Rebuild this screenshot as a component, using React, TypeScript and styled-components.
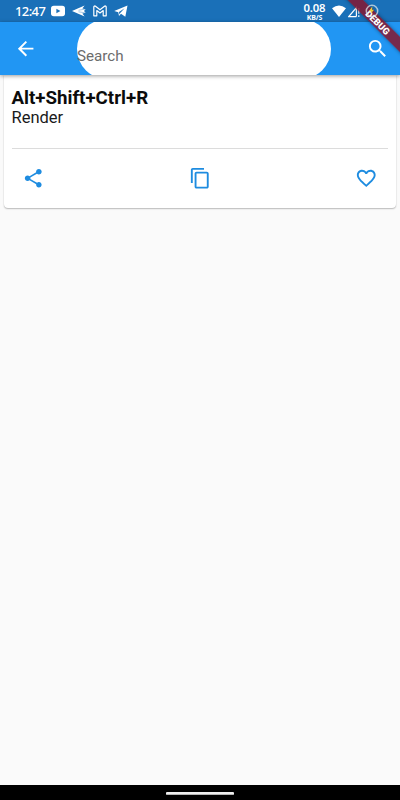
import React from 'react';
import styled, { createGlobalStyle } from 'styled-components';

const GlobalStyle = createGlobalStyle`
  *, *::before, *::after { box-sizing: border-box; }
  body { margin: 0; background: #fafafa; font-family: Roboto, sans-serif; }
`;

const Screen = styled.div`
  position: relative;
  display: flex;
  flex-direction: column;
  width: 400px;
  height: 800px;
  overflow: hidden;
  background: #fafafa;
`;

const StatusBar = styled.header`
  flex: none;
  display: flex;
  align-items: center;
  justify-content: space-between;
  height: 22px;
  padding: 0 21px 0 15px;
  background: #1a70b8;
  color: #fff;
`;

const StatusGroup = styled.div<{ $gap: number }>`
  display: flex;
  align-items: center;
  gap: ${(p) => p.$gap}px;
`;

const Clock = styled.span`
  width: 30px;
  margin-right: -1px;
  font: 500 13px/22px 'Noto Sans', sans-serif;
  letter-spacing: -0.6px;
  white-space: nowrap;
`;

const Speed = styled.div`
  display: flex;
  flex-direction: column;
  align-items: center;
  width: 24px;
  margin-right: 2.5px;
  padding-top: 1px;
  font: 600 11.3px/12px 'Noto Sans', sans-serif;
  letter-spacing: -0.1px;
`;

const SpeedUnit = styled.span`
  font-size: 7px;
  font-weight: 700;
  line-height: 7px;
  letter-spacing: -0.2px;
`;

const AppBar = styled.nav`
  position: relative;
  z-index: 1;
  flex: none;
  display: flex;
  align-items: center;
  height: 53px;
  padding: 0 11px 0 14px;
  background: #2196f3;
  color: #fff;
  box-shadow: 0 1px 4px rgba(0, 0, 0, 0.4);
`;

const IconButton = styled.button`
  display: flex;
  padding: 0;
  border: 0;
  background: none;
  color: inherit;
`;

const SearchClip = styled.div`
  display: flex;
  align-items: center;
  width: 254px;
  height: 53px;
  margin: 0 auto 0 39.7px;
  overflow: hidden;
`;

const SearchField = styled.div`
  flex: none;
  width: 254px;
  height: 60px;
  padding-top: 27px;
  border-radius: 30px;
  background: #fff;
  color: #6c6c6c;
  font-size: 15.2px;
  line-height: 20px;
`;

const Card = styled.article`
  display: flex;
  flex-direction: column;
  height: 133px;
  margin: 0 4px;
  padding: 13px 8px 0;
  border-radius: 0 0 4px 4px;
  background: #fff;
  color: #1a1a1a;
  box-shadow: 0 1px 1.5px rgba(0, 0, 0, 0.25), 0 0 1px rgba(0, 0, 0, 0.12);
`;

const Shortcut = styled.h1`
  margin: 0 0 0 -0.5px;
  font-size: 18.7px;
  font-weight: 700;
  line-height: 20px;
  color: #0c0c0c;
`;

const Description = styled.p`
  margin: 0 0 0 -0.5px;
  font-size: 16.5px;
  line-height: 20px;
`;

const Divider = styled.hr`
  width: 100%;
  height: 1px;
  margin: 20px 0 0;
  border: 0;
  background: #dcdcdc;
`;

const Actions = styled.div`
  display: flex;
  align-items: center;
  justify-content: space-between;
  height: 61px;
  padding: 0 10.5px 0 10px;
  color: #1e8ce0;
`;

const Body = styled.main`
  flex: 1;
`;

const NavigationBar = styled.footer`
  flex: none;
  display: flex;
  justify-content: center;
  height: 15px;
  padding-top: 7px;
  background: #000;
`;

const HomeHandle = styled.div`
  width: 68px;
  height: 3px;
  border-radius: 1px;
  border-bottom: 1px solid #b5b5b5;
  background: #eee;
`;

const DebugBanner = styled.div`
  position: absolute;
  z-index: 2;
  top: 16.5px;
  left: 330px;
  width: 96px;
  height: 10.6px;
  transform: rotate(45deg);
  background: rgba(135, 22, 45, 0.84);
  box-shadow: 0 0 4px rgba(0, 0, 0, 0.4);
  color: #fff;
  font-size: 9.3px;
  font-weight: 900;
  line-height: 11px;
  text-align: center;
`;

const BatteryGlyph = styled.svg`
  position: relative;
  z-index: 3;
`;

const MaterialIcon = ({ d, size = 23.3 }: { d: string; size?: number }) => (
  <svg width={size} height={size} viewBox="0 0 24 24" fill="currentColor">
    <path d={d} />
  </svg>
);

const icons = {
  back: 'M20 11H7.83l5.59-5.59L12 4l-8 8 8 8 1.41-1.41L7.83 13H20v-2z',
  search:
    'M15.5 14h-.79l-.28-.27A6.471 6.471 0 0 0 16 9.5 6.5 6.5 0 1 0 9.5 16c1.61 0 3.09-.59 4.23-1.57l.27.28v.79l5 4.99L20.49 19l-4.99-5zm-6 0C7.01 14 5 11.99 5 9.5S7.01 5 9.5 5 14 7.01 14 9.5 11.99 14 9.5 14z',
  share:
    'M18 16.08c-.76 0-1.44.3-1.96.77L8.91 12.7c.05-.23.09-.46.09-.7s-.04-.47-.09-.7l7.05-4.11c.54.5 1.25.81 2.04.81 1.66 0 3-1.34 3-3s-1.34-3-3-3-3 1.34-3 3c0 .24.04.47.09.7L8.04 9.81C7.5 9.31 6.79 9 6 9c-1.66 0-3 1.34-3 3s1.34 3 3 3c.79 0 1.5-.31 2.04-.81l7.12 4.16c-.05.21-.08.43-.08.65 0 1.61 1.31 2.92 2.92 2.92s2.92-1.31 2.92-2.92-1.31-2.92-2.92-2.92z',
  copy: 'M16 1H4c-1.1 0-2 .9-2 2v14h2V3h12V1zm3 4H8c-1.1 0-2 .9-2 2v14c0 1.1.9 2 2 2h11c1.1 0 2-.9 2-2V7c0-1.1-.9-2-2-2zm0 16H8V7h11v14z',
  heart:
    'M16.5 3c-1.74 0-3.41.81-4.5 2.09C10.91 3.81 9.24 3 7.5 3 4.42 3 2 5.42 2 8.5c0 3.78 3.4 6.86 8.55 11.54L12 21.35l1.45-1.32C18.6 15.36 22 12.28 22 8.5 22 5.42 19.58 3 16.5 3zm-4.4 15.55l-.1.1-.1-.1C7.14 14.24 4 11.39 4 8.5 4 6.5 5.5 5 7.5 5c1.54 0 3.04.99 3.57 2.36h1.87C13.46 5.99 14.96 5 16.5 5c2 0 3.5 1.5 3.5 3.5 0 2.89-3.14 5.74-7.9 10.05z',
};

const VideoIcon = () => (
  <svg width="14" height="12" viewBox="0 0 14 12">
    <rect y="0.7" width="14" height="10.6" rx="2.8" fill="#fff" />
    <path d="M5.4 3.7v4.6l4-2.3z" fill="#1a70b8" />
  </svg>
);

const ArrowIcon = () => (
  <svg width="14" height="12" viewBox="0 0 14 12" fill="#fff">
    <path d="M0 6 12.6.6 10.4 3.6 13.6 4.3 12 6 13.6 7.7 10.4 8.4 12.6 11.4z" />
    <path d="M6.5 5.2 13 4.2M6.5 6.8l6.5 1" stroke="#1a70b8" strokeWidth=".4" />
  </svg>
);

const MailIcon = () => (
  <svg width="14" height="12" viewBox="0 0 14 12" fill="none" stroke="#fff" strokeWidth="1.2" strokeLinejoin="round">
    <path d="M.8 2.2Q.8.8 2.2 1L7 4.8 11.8 1q1.4-.2 1.4 1.2v8.6h-3V5.6L7 8 3.8 5.6v5.2h-3z" />
  </svg>
);

const PlaneIcon = () => (
  <svg width="14" height="12" viewBox="0 0 14 12">
    <path d="M.2 6 13.5.5 11.3 11.8 7 8.8 5 11 4.3 7.3z" fill="#fff" />
    <path d="M5 7 10.6 3.2 6 8.2 5.3 9.6" fill="#1a70b8" />
  </svg>
);

const WifiIcon = () => (
  <svg width="14" height="12" viewBox="0 0 14 12">
    <path d="M0 3.2Q7-2.4 14 3.2L7 12z" fill="#fff" />
  </svg>
);

const SignalIcon = () => (
  <svg width="14" height="13" viewBox="0 0 14 13" fill="none" stroke="#fff" strokeWidth="1.2">
    <path d="M8.4 11.6H.8L8.4 2.6v9M10.8 3v5.8M10.8 10.2v1.7" />
  </svg>
);

const BatteryIcon = () => (
  <BatteryGlyph width="14" height="14" viewBox="0 0 14 14">
    <circle cx="7" cy="7" r="5.7" fill="none" stroke="#dfe5e9" strokeOpacity=".75" strokeWidth="1.5" />
    <path d="M7.4 2.3 3.8 7.2h2.4L6 9.6l3-3.8H7z" fill="#f2cf3d" />
  </BatteryGlyph>
);

export default function App() {
  return (
    <>
      <GlobalStyle />
      <Screen>
        <StatusBar>
          <StatusGroup $gap={7}>
            <Clock>12:47</Clock>
            <VideoIcon />
            <ArrowIcon />
            <MailIcon />
            <PlaneIcon />
          </StatusGroup>
          <StatusGroup $gap={2.7}>
            <Speed>
              <span>0.08</span>
              <SpeedUnit>KB/S</SpeedUnit>
            </Speed>
            <WifiIcon />
            <SignalIcon />
            <BatteryIcon />
          </StatusGroup>
        </StatusBar>
        <AppBar>
          <IconButton aria-label="Back">
            <MaterialIcon d={icons.back} />
          </IconButton>
          <SearchClip>
            <SearchField>Search</SearchField>
          </SearchClip>
          <IconButton aria-label="Search">
            <MaterialIcon d={icons.search} />
          </IconButton>
        </AppBar>
        <Body>
          <Card>
            <Shortcut>Alt+Shift+Ctrl+R</Shortcut>
            <Description>Render</Description>
            <Divider />
            <Actions>
              <IconButton aria-label="Share">
                <MaterialIcon d={icons.share} size={22.5} />
              </IconButton>
              <IconButton aria-label="Copy">
                <MaterialIcon d={icons.copy} size={22.5} />
              </IconButton>
              <IconButton aria-label="Favorite">
                <MaterialIcon d={icons.heart} size={22.5} />
              </IconButton>
            </Actions>
          </Card>
        </Body>
        <NavigationBar>
          <HomeHandle />
        </NavigationBar>
        <DebugBanner>DEBUG</DebugBanner>
      </Screen>
    </>
  );
}
